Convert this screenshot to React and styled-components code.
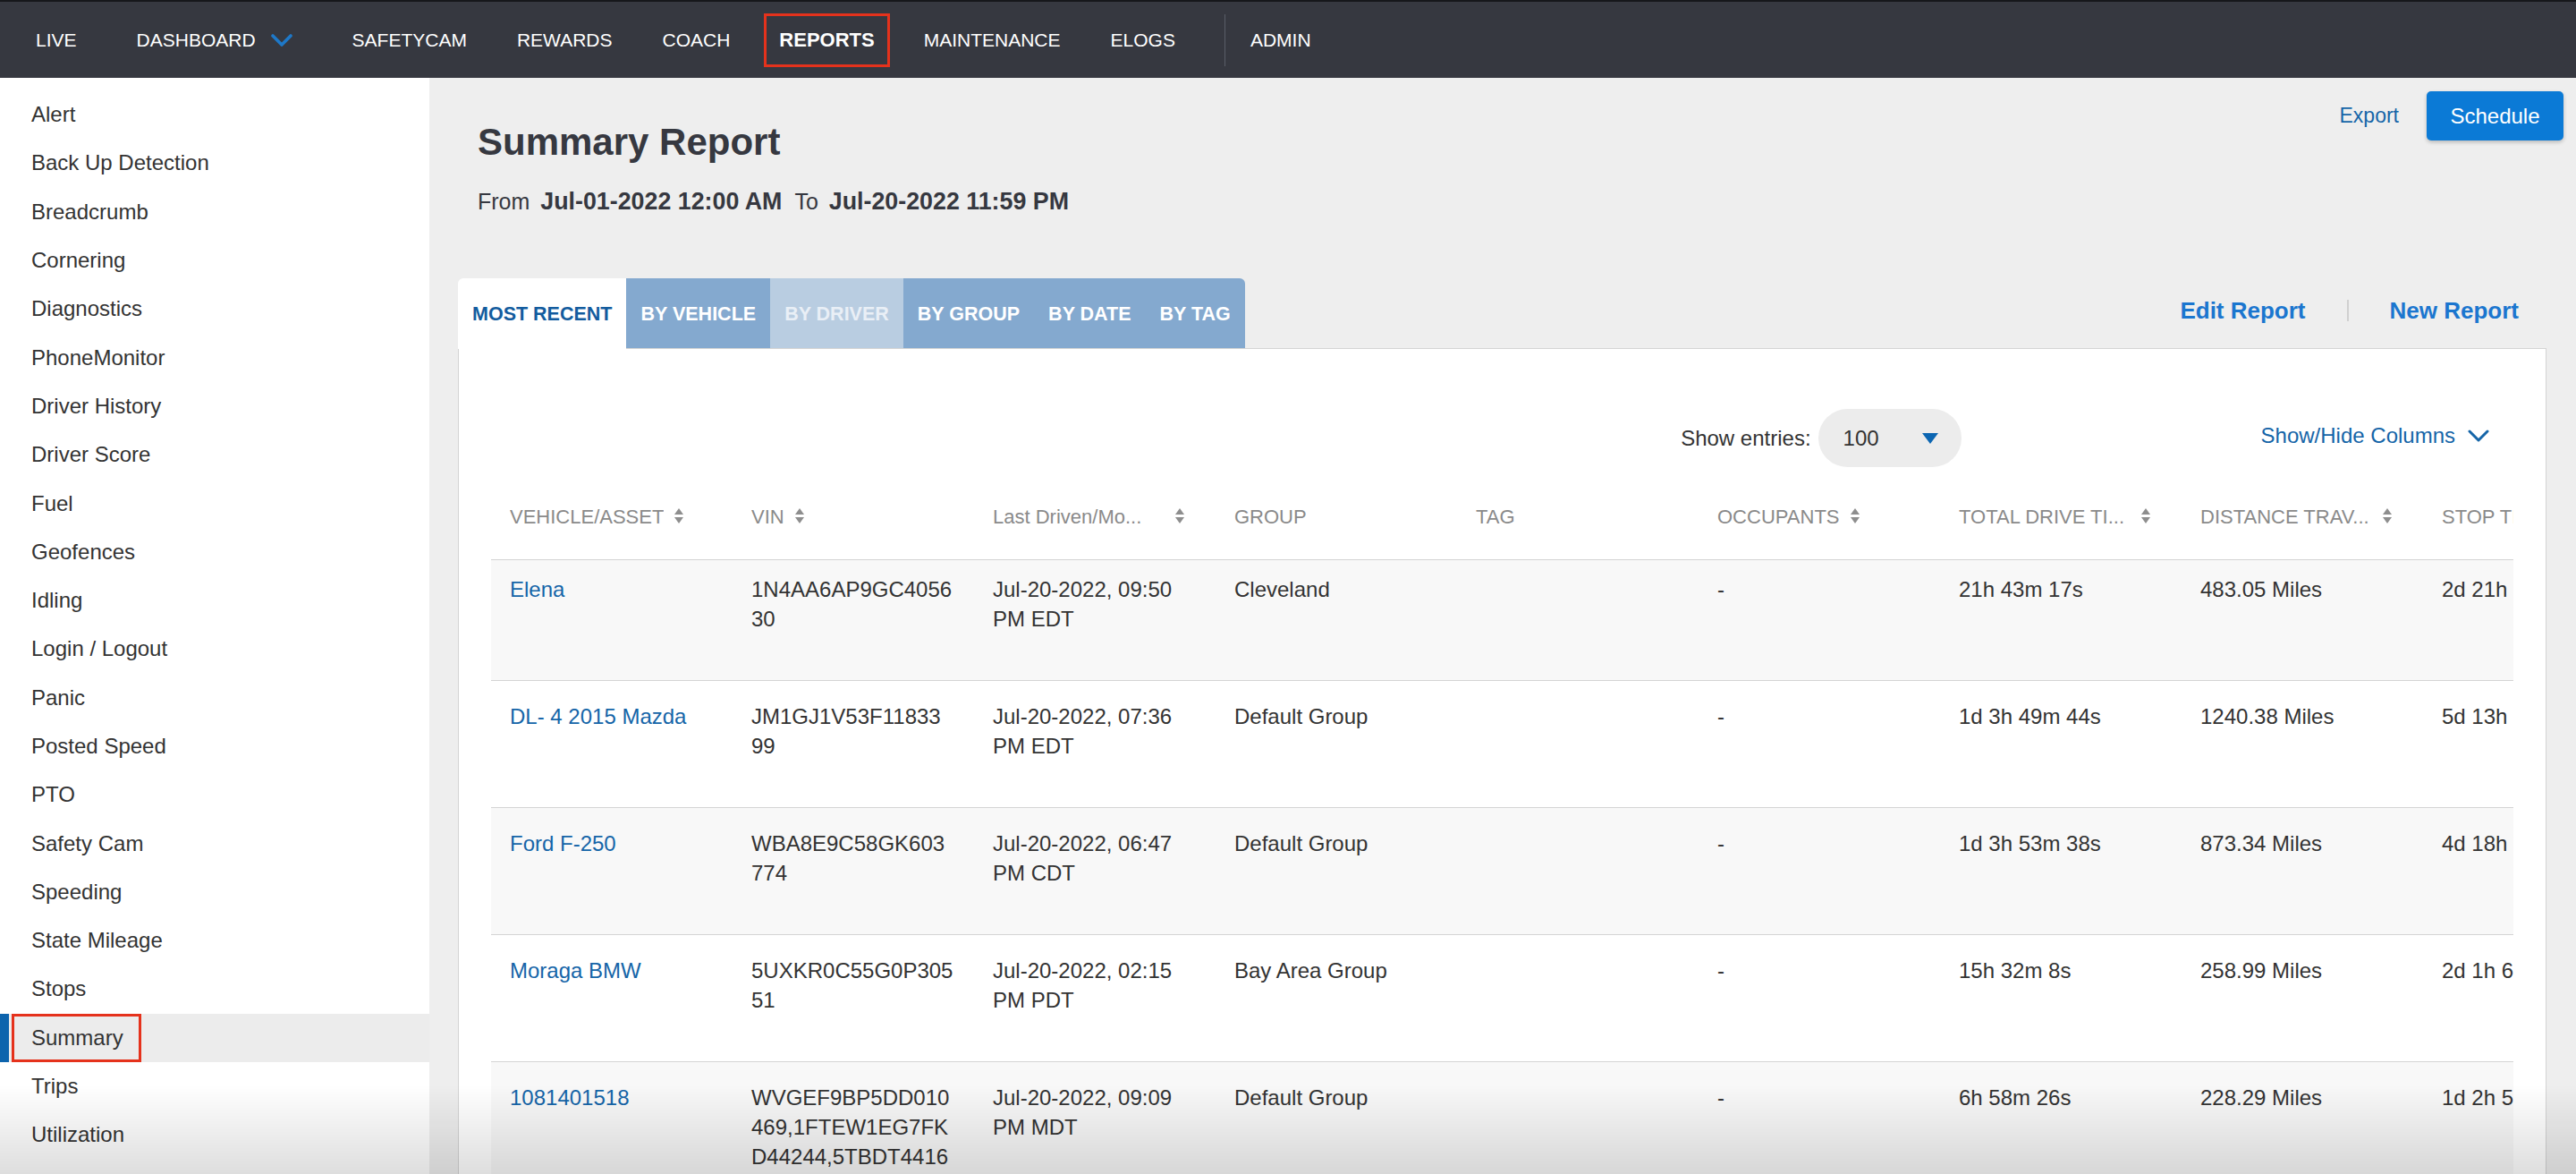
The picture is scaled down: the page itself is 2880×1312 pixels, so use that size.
import React from 'react';
import styled, { createGlobalStyle, css } from 'styled-components';

const GlobalStyle = createGlobalStyle`
  html, body {
    margin: 0;
    padding: 0;
    background: #eeeeee;
    font-family: "Liberation Sans", Arial, sans-serif;
    color: #333;
  }
  * { box-sizing: border-box; }
`;

const Page = styled.div`
  height: 1312px;
  display: flex;
  flex-direction: column;
  overflow: hidden;
`;

const TopNav = styled.nav`
  height: 87px;
  flex-shrink: 0;
  background: #363840;
  border-top: 2px solid #16171b;
  display: flex;
  align-items: center;
  padding-left: 12px;
`;

const NavItem = styled.div`
  display: flex;
  align-items: center;
  height: 60px;
  padding: 0 ${p => (p.$wide ? '39px' : '28px')};
  color: #fff;
  font-size: 21px;
  white-space: nowrap;

  ${p => p.$boxed && css`
    margin: 0 10px;
    padding: 0 14px;
    border: 3px solid #e5321c;
    font-weight: bold;
    font-size: 22px;
  `}
`;

const NavDivider = styled.div`
  width: 1px;
  height: 58px;
  margin-left: 27px;
  background: #5a5e67;
`;

const ChevronSlot = styled.span`
  display: flex;
  margin-left: ${p => p.$gap || 17}px;
  flex-shrink: 0;
`;

const Content = styled.div`
  flex: 1;
  display: flex;
  min-height: 0;
`;

const Sidebar = styled.aside`
  width: 480px;
  flex-shrink: 0;
  background: #fff;
  padding-top: 14px;
`;

const SideItem = styled.div`
  position: relative;
  height: 54.3px;
  display: flex;
  align-items: center;
  padding-left: 35px;
  font-size: 24px;
  color: #333;

  ${p => p.$active && css`
    background: #ececec;
    &::before {
      content: '';
      position: absolute;
      left: 0;
      top: 0;
      bottom: 0;
      width: 10px;
      background: #0d64ad;
    }
  `}
`;

const Marked = styled.span`
  display: flex;
  align-items: center;
  height: 100%;
  margin-left: -22px;
  padding: 0 17px 0 19px;
  border: 3px solid #e5321c;
`;

const Main = styled.main`
  flex: 1;
  min-width: 0;
  display: flex;
  flex-direction: column;
`;

const HeaderBar = styled.div`
  display: flex;
  justify-content: space-between;
  align-items: flex-start;
  padding: 15px 14px 0 54px;
`;

const TitleBlock = styled.div`
  padding-top: 33px;
  color: #363840;
`;

const Title = styled.h1`
  margin: 0;
  font-size: 42px;
  line-height: 48px;
  font-weight: bold;
`;

const DateRange = styled.div`
  margin-top: 27px;
  font-size: 25px;
  line-height: 30px;

  b {
    margin: 0 14px 0 12px;
    font-size: 26.8px;
  }
`;

const Actions = styled.div`
  display: flex;
  align-items: center;
  gap: 31px;
`;

const TextLink = styled.span`
  color: ${p => (p.$strong ? '#1b76cf' : '#1565a8')};
  font-size: ${p => p.$size || 24}px;
  font-weight: ${p => (p.$strong ? 'bold' : 'normal')};
  white-space: nowrap;
`;

const ScheduleButton = styled.button`
  width: 153px;
  height: 55px;
  border: none;
  border-radius: 5px;
  background: #0b7ad6;
  color: #fff;
  font-family: inherit;
  font-size: 24px;
  box-shadow: 0 2px 4px rgba(0, 0, 0, 0.22);
`;

const TabRow = styled.div`
  margin: 71px 33px 0 32px;
  padding-right: 31px;
  display: flex;
  justify-content: space-between;
  align-items: center;
`;

const Tabs = styled.div`
  display: flex;
  border-radius: 6px 6px 0 0;
  overflow: hidden;
  position: relative;
  z-index: 1;
  margin-bottom: -1px;
`;

const Tab = styled.div`
  height: 79px;
  display: flex;
  align-items: center;
  padding: 2px 16px 0;
  font-size: 21.5px;
  font-weight: bold;
  white-space: nowrap;
  background: #84a9cf;
  color: #fff;
  border-bottom: 1px solid #d4d4d4;

  ${p => p.$active && css`
    background: #fff;
    color: #135c9e;
    border-bottom-color: #fff;
  `}
  ${p => p.$muted && css`
    background: #b9cde1;
    color: #e9eff6;
  `}
`;

const ReportLinks = styled.div`
  display: flex;
  align-items: center;
  margin-top: -6px;
`;

const LinkDivider = styled.div`
  width: 2px;
  height: 24px;
  margin: 0 46px;
  background: #d0d0d0;
`;

const Panel = styled.section`
  flex: 1;
  margin: 0 33px 0 32px;
  background: #fff;
  border: 1px solid #d4d4d4;
  padding: 0 36px;
  min-width: 0;
`;

const Toolbar = styled.div`
  padding-top: 67px;
  display: flex;
  justify-content: flex-end;
  align-items: center;
  font-size: 24px;
`;

const EntriesSelect = styled.div`
  width: 160px;
  height: 65px;
  margin-left: 8px;
  border-radius: 33px;
  background: #ececec;
  display: flex;
  align-items: center;
  justify-content: space-between;
  padding: 0 26px 0 28px;
  color: #333;
`;

const ColumnsToggle = styled.div`
  display: flex;
  align-items: center;
  margin: -6px 27px 0 335px;
`;

const TableWrap = styled.div`
  overflow: hidden;
`;

const Row = styled.div`
  display: grid;
  grid-template-columns: repeat(9, 270px);
  width: max-content;
  background: ${p => (p.$odd ? '#f8f8f8' : '#fff')};
  border-bottom: 1px solid #d4d4d4;
`;

const HeadCell = styled.div`
  display: flex;
  align-items: center;
  padding: 43px 20px 34px 21px;
  font-size: 22px;
  line-height: 26px;
  color: #8a8a8a;
  white-space: nowrap;
`;

const HeadLabel = styled.span`
  display: inline-block;
  width: ${p => (p.$wide ? '192px' : 'auto')};
  overflow: hidden;
`;

const SortIcon = styled.svg`
  margin-left: 12px;
  margin-top: -3px;
  flex-shrink: 0;
`;

const Cell = styled.div`
  padding: ${p => (p.$first ? '16px' : '23px')} 20px 52px 21px;
  font-size: 24px;
  line-height: 33px;
  color: ${p => (p.$link ? '#1565a8' : '#333')};
  white-space: pre-line;
`;

const BottomShade = styled.div`
  position: fixed;
  left: 0;
  right: 0;
  bottom: 0;
  height: 100px;
  pointer-events: none;
  background: linear-gradient(to bottom, rgba(0, 0, 0, 0), rgba(0, 0, 0, 0.13));
`;

const sideItems = [
  'Alert', 'Back Up Detection', 'Breadcrumb', 'Cornering', 'Diagnostics',
  'PhoneMonitor', 'Driver History', 'Driver Score', 'Fuel', 'Geofences',
  'Idling', 'Login / Logout', 'Panic', 'Posted Speed', 'PTO', 'Safety Cam',
  'Speeding', 'State Mileage', 'Stops', 'Summary', 'Trips', 'Utilization',
];

const columns = [
  { label: 'VEHICLE/ASSET', sort: true },
  { label: 'VIN', sort: true },
  { label: 'Last Driven/Mo...', sort: true, wide: true },
  { label: 'GROUP' },
  { label: 'TAG' },
  { label: 'OCCUPANTS', sort: true },
  { label: 'TOTAL DRIVE TI...', sort: true, wide: true },
  { label: 'DISTANCE TRAV...', sort: true, wide: true },
  { label: 'STOP TIME', sort: true },
];

const rows = [
  ['Elena', '1N4AA6AP9GC4056\n30', 'Jul-20-2022, 09:50\nPM EDT', 'Cleveland', '', '-', '21h 43m 17s', '483.05 Miles', '2d 21h 14m 7s'],
  ['DL- 4 2015 Mazda', 'JM1GJ1V53F11833\n99', 'Jul-20-2022, 07:36\nPM EDT', 'Default Group', '', '-', '1d 3h 49m 44s', '1240.38 Miles', '5d 13h 20m 2s'],
  ['Ford F-250', 'WBA8E9C58GK603\n774', 'Jul-20-2022, 06:47\nPM CDT', 'Default Group', '', '-', '1d 3h 53m 38s', '873.34 Miles', '4d 18h 2m 51s'],
  ['Moraga BMW', '5UXKR0C55G0P305\n51', 'Jul-20-2022, 02:15\nPM PDT', 'Bay Area Group', '', '-', '15h 32m 8s', '258.99 Miles', '2d 1h 6m 40s'],
  ['1081401518', 'WVGEF9BP5DD010\n469,1FTEW1EG7FK\nD44244,5TBDT4416\nX5223019', 'Jul-20-2022, 09:09\nPM MDT', 'Default Group', '', '-', '6h 58m 26s', '228.29 Miles', '1d 2h 5m 9s'],
];

const DownChevron = ({ color, stroke = 3 }) => (
  <svg width="24" height="14" viewBox="0 0 24 14">
    <polyline points="2,2 12,12 22,2" fill="none" stroke={color} strokeWidth={stroke} strokeLinecap="round" strokeLinejoin="round" />
  </svg>
);

const Sort = () => (
  <SortIcon width="10" height="17" viewBox="0 0 10 17">
    <polygon points="0,7 5,0 10,7" fill="#8e8e8e" />
    <polygon points="0,10 10,10 5,17" fill="#8e8e8e" />
  </SortIcon>
);

export default function App() {
  return (
    <Page>
      <GlobalStyle />
      <TopNav>
        <NavItem>LIVE</NavItem>
        <NavItem $wide>
          DASHBOARD
          <ChevronSlot>
            <DownChevron color="#1e78c8" stroke={3.6} />
          </ChevronSlot>
        </NavItem>
        <NavItem>SAFETYCAM</NavItem>
        <NavItem>REWARDS</NavItem>
        <NavItem>COACH</NavItem>
        <NavItem $boxed>REPORTS</NavItem>
        <NavItem>MAINTENANCE</NavItem>
        <NavItem>ELOGS</NavItem>
        <NavDivider />
        <NavItem>ADMIN</NavItem>
      </TopNav>

      <Content>
        <Sidebar>
          {sideItems.map(item => (
            <SideItem key={item} $active={item === 'Summary'}>
              {item === 'Summary' ? <Marked>{item}</Marked> : item}
            </SideItem>
          ))}
        </Sidebar>

        <Main>
          <HeaderBar>
            <TitleBlock>
              <Title>Summary Report</Title>
              <DateRange>
                From<b>Jul-01-2022 12:00 AM</b>To<b>Jul-20-2022 11:59 PM</b>
              </DateRange>
            </TitleBlock>
            <Actions>
              <TextLink $size={23}>Export</TextLink>
              <ScheduleButton>Schedule</ScheduleButton>
            </Actions>
          </HeaderBar>

          <TabRow>
            <Tabs>
              <Tab $active>MOST RECENT</Tab>
              <Tab>BY VEHICLE</Tab>
              <Tab $muted>BY DRIVER</Tab>
              <Tab>BY GROUP</Tab>
              <Tab>BY DATE</Tab>
              <Tab>BY TAG</Tab>
            </Tabs>
            <ReportLinks>
              <TextLink $strong $size={26}>Edit Report</TextLink>
              <LinkDivider />
              <TextLink $strong $size={26}>New Report</TextLink>
            </ReportLinks>
          </TabRow>

          <Panel>
            <Toolbar>
              <span>Show entries:</span>
              <EntriesSelect>
                <span>100</span>
                <svg width="18" height="12" viewBox="0 0 18 12">
                  <polygon points="0,0 18,0 9,12" fill="#0c66b2" />
                </svg>
              </EntriesSelect>
              <ColumnsToggle>
                <TextLink>Show/Hide Columns</TextLink>
                <ChevronSlot $gap={14}>
                  <DownChevron color="#1565a8" />
                </ChevronSlot>
              </ColumnsToggle>
            </Toolbar>

            <TableWrap>
              <Row>
                {columns.map(col => (
                  <HeadCell key={col.label}>
                    <HeadLabel $wide={col.wide}>{col.label}</HeadLabel>
                    {col.sort && <Sort />}
                  </HeadCell>
                ))}
              </Row>
              {rows.map((row, i) => (
                <Row key={row[0]} $odd={i % 2 === 0}>
                  {row.map((value, j) => (
                    <Cell key={j} $first={i === 0} $link={j === 0}>{value}</Cell>
                  ))}
                </Row>
              ))}
            </TableWrap>
          </Panel>
        </Main>
      </Content>
      <BottomShade />
    </Page>
  );
}
